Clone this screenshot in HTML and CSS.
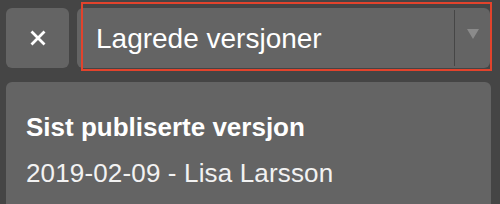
FILE: index.html
```html
<!DOCTYPE html>
<html lang="no">
<head>
<meta charset="UTF-8">
<meta name="viewport" content="width=device-width, initial-scale=1.0">
<title>Lagrede versjoner</title>
<link rel="stylesheet" href="styles.css">
</head>
<body>
    <div class="toolbar">
        <button class="close-btn" aria-label="Lukk">
            <svg width="16" height="16" viewBox="0 0 16 16">
                <path d="M1.5 1.5 L14.5 14.5 M14.5 1.5 L1.5 14.5" stroke="#fff" stroke-width="2.8"/>
            </svg>
        </button>
        <div class="select-box">
            <span class="select-label">Lagrede versjoner</span>
            <span class="select-sep"></span>
            <span class="select-arrow"></span>
            <div class="highlight"></div>
        </div>
    </div>

    <div class="card">
        <div class="card-title">Sist publiserte versjon</div>
        <div class="card-line">2019-02-09 - Lisa Larsson</div>
    </div>
</body>
</html>
```

FILE: styles.css
```css
body {
    margin: 0;
    padding: 0;
    background-color: #454545;
    font-family: "Liberation Sans", Arial, sans-serif;
    color: #fff;
}
.toolbar {
    display: flex;
    gap: 8px;
    padding: 8px 10px 0 6px;
}
.close-btn {
    width: 63px;
    height: 60px;
    flex: none;
    border: none;
    border-radius: 6px;
    background-color: #646464;
    display: flex;
    align-items: center;
    justify-content: center;
    padding: 0;
}
.select-box {
    position: relative;
    flex: 1;
    height: 60px;
    display: flex;
    align-items: center;
    background-color: #646464;
    border-radius: 6px;
}
.select-label {
    flex: 1;
    padding-left: 19px;
    font-size: 28px;
    padding-top: 2px;
}
.select-sep {
    width: 1px;
    height: 56px;
    background-color: #464646;
}
.select-arrow {
    width: 35px;
    display: flex;
    justify-content: center;
}
.select-arrow::before {
    content: "";
    border-left: 6px solid transparent;
    border-right: 6px solid transparent;
    border-top: 10px solid #8a8a8a;
    margin-top: -8px;
}
.highlight {
    position: absolute;
    left: 4px;
    top: -6px;
    right: -2px;
    bottom: -3px;
    border: 2px solid #e2432c;
    pointer-events: none;
}
.card {
    box-sizing: border-box;
    height: 122px;
    margin: 14px 9px 0 6px;
    padding: 30px 20px 0;
    background-color: #646464;
    border-radius: 6px 6px 0 0;
}
.card-title {
    font-weight: bold;
    font-size: 26px;
}
.card-line {
    margin-top: 15px;
    font-size: 26px;
    letter-spacing: 0.15px;
    color: #f2f2f2;
}
```
